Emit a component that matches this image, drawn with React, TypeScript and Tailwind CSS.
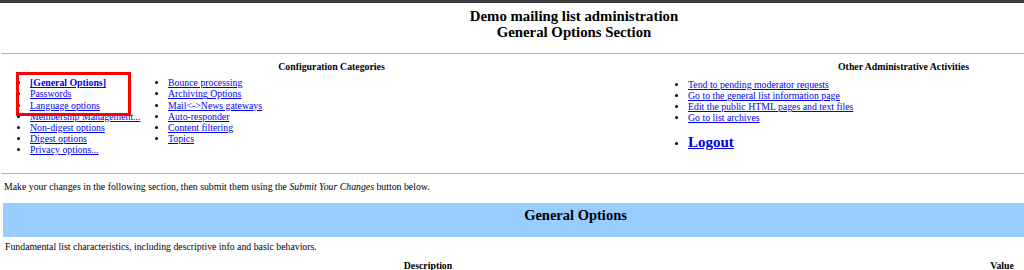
const catsLeft = [
  "Passwords",
  "Language options",
  "Membership Management...",
  "Non-digest options",
  "Digest options",
  "Privacy options...",
]

const catsRight = [
  "Bounce processing",
  "Archiving Options",
  "Mail<->News gateways",
  "Auto-responder",
  "Content filtering",
  "Topics",
]

const otherActions = [
  "Tend to pending moderator requests",
  "Go to the general list information page",
  "Edit the public HTML pages and text files",
  "Go to list archives",
]

function Item({ children, bold }: { children: React.ReactNode; bold?: boolean }) {
  return (
    <li className="list-disc whitespace-nowrap">
      <a href="#" className={`text-[#0000ee] underline ${bold ? "font-bold" : ""}`}>
        {children}
      </a>
    </li>
  )
}

export default function App() {
  return (
    <div className="w-[1024px] h-[270px] overflow-hidden bg-white relative">
      <div
        className="w-[1148px] text-[9.8px] leading-[11.2px] text-black"
        style={{ fontFamily: '"Liberation Serif", "Times New Roman", serif' }}
      >
        <div className="h-[3px] bg-[#3b3b40]" />

        <div className="pt-[5px] text-center font-bold text-[14.8px] leading-[16px]">
          <div>Demo mailing list administration</div>
          <div>General Options Section</div>
        </div>

        <hr className="mt-[13px] mx-[1px] border-t border-[#b4b4b4]" />

        <div className="flex pt-[7px] pl-[4px]">
          <div className="w-[655px]">
            <div className="text-center font-bold">Configuration Categories</div>
            <div className="flex mt-[5px]">
              <ul className="w-[138px] pl-[26px]">
                <Item bold>[General Options]</Item>
                {catsLeft.map((c) => (
                  <Item key={c}>{c}</Item>
                ))}
              </ul>
              <ul className="pl-[26px]">
                {catsRight.map((c) => (
                  <Item key={c}>{c}</Item>
                ))}
              </ul>
            </div>
          </div>
          <div className="flex-1">
            <div className="text-center font-bold">Other Administrative Activities</div>
            <ul className="mt-[7px] pl-[29px] leading-[11px]">
              {otherActions.map((c) => (
                <Item key={c}>{c}</Item>
              ))}
            </ul>
            <ul className="mt-[10px] pl-[29px]">
              <li className="list-disc">
                <a href="#" className="text-[#0000ee] underline font-bold text-[15px] leading-[18px]">
                  Logout
                </a>
              </li>
            </ul>
          </div>
        </div>

        <hr className="mt-[17px] mx-[1px] border-t border-[#b4b4b4]" />

        <p className="pt-[7px] pl-[4px]">
          Make your changes in the following section, then submit them using the{" "}
          <em>Submit Your Changes</em> button below.
        </p>

        <div className="mt-[11px] ml-[3px] h-[34px] bg-[#99ccff] pt-[3px] text-center font-bold text-[14.5px] leading-[18px]">
          General Options
        </div>

        <p className="pt-[4px] pl-[5px]">
          Fundamental list characteristics, including descriptive info and basic behaviors.
        </p>

        <div className="flex pt-[8px] font-bold">
          <div className="w-[856px] text-center">Description</div>
          <div className="flex-1 text-center">Value</div>
        </div>
      </div>

      <div className="absolute left-[16px] top-[72px] w-[115px] h-[44px] border-[3px] border-[#ff0000]" />
    </div>
  )
}
